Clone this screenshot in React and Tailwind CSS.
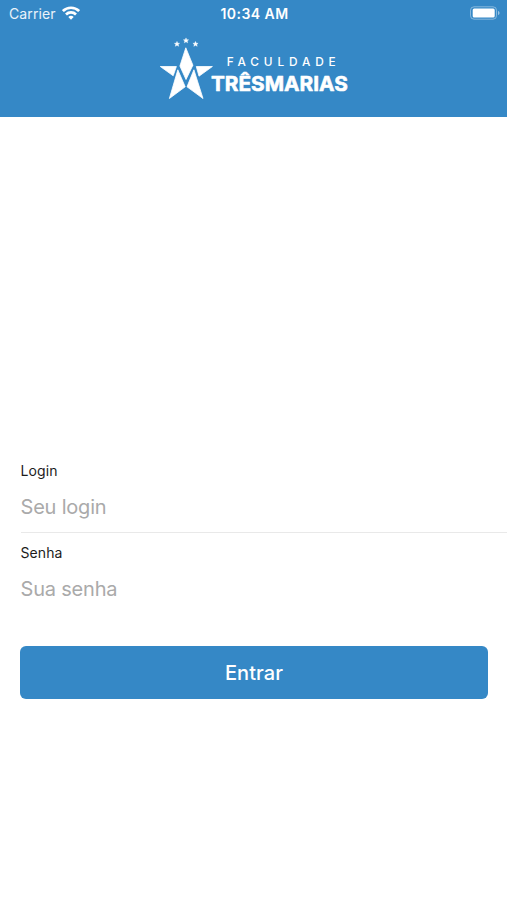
import React from "react";

/**
 * Login screen
 * - Blue header with status bar and school logo
 * - Two stacked fields and a full width submit button
 */

export default function App() {
  return (
    <div className="flex h-[900px] w-full flex-col overflow-hidden bg-white font-['Inter',sans-serif]">
      <header className="h-[117px] bg-[#3588c6] text-white">
        <StatusBar />
        <Logo />
      </header>
      <main className="flex flex-col pt-[334px] pl-5">
        <Field id="login" label="Login" placeholder="Seu login" type="text" />
        <div className="ml-px h-px bg-[#e9e9e9]" />
        <Field id="senha" label="Senha" placeholder="Sua senha" type="password" />
        <button
          type="button"
          className="mt-[31.5px] mr-[19px] h-[53.5px] rounded-md bg-[#3588c6] pt-px text-[20px] font-medium tracking-[0.1px] text-white"
        >
          Entrar
        </button>
      </main>
    </div>
  );
}

function StatusBar() {
  return (
    <div className="grid h-7 grid-cols-3 items-center pr-[7px] pl-[9px] text-[14px] leading-7">
      <div className="flex items-center gap-[6px]">
        <span className="tracking-[0.1px] text-white/90">Carrier</span>
        <WifiIcon />
      </div>
      <div className="text-center text-[14px] font-semibold tracking-[0.45px] whitespace-nowrap">10:34 AM</div>
      <div className="flex justify-end">
        <BatteryIcon />
      </div>
    </div>
  );
}

function WifiIcon() {
  return (
    <svg
      aria-hidden
      className="-mt-[2px]"
      width="18"
      height="14"
      viewBox="0 0 18 14"
      fill="none"
      stroke="white"
      strokeWidth="2.7"
    >
      <path d="M0.9 5.1a11.5 11.5 0 0 1 16.2 0" />
      <path d="M4 8.5a7.1 7.1 0 0 1 10 0" />
      <path d="M9 13.7 6.3 11a3.8 3.8 0 0 1 5.4 0Z" fill="white" stroke="none" />
    </svg>
  );
}

function BatteryIcon() {
  return (
    <svg aria-hidden className="-mt-[2px]" width="30" height="14" viewBox="0 0 30 14">
      <rect x="0.5" y="0.8" width="26" height="12.4" rx="3.5" fill="none" stroke="white" strokeOpacity="0.4" />
      <rect x="2.7" y="2.6" width="22" height="9" rx="1.5" fill="white" />
      <path d="M28 5v4c1-.4 1.5-1.1 1.5-2s-.5-1.6-1.5-2Z" fill="white" fillOpacity="0.5" />
    </svg>
  );
}

function Logo() {
  return (
    <svg
      role="img"
      aria-label="Faculdade Três Marias"
      className="mx-auto mt-[2px] block h-[80px] w-[207px]"
      viewBox="150 30 207 80"
      fill="white"
    >
      <SmallStar x={177} y={44} />
      <SmallStar x={186} y={40.5} />
      <SmallStar x={195.5} y={44} />
      <g stroke="white" strokeWidth="0.8" strokeLinejoin="round">
        <path d="M185.8 47.8 192.9 65.2 186 79.5 179.9 66Z" />
        <path d="M160.3 66.5H176.4L173.2 75.8Z" />
        <path d="M196.3 66.5H212.4L199 76.2Z" />
        <path d="M177.8 69.8 185.2 86.8 169.4 98.5Z" />
        <path d="M193.9 69.8 187 86.8 203 98.5Z" />
      </g>
      <text x="226.7" y="66.3" textLength="109" fontSize="11.8" fontWeight="500">
        FACULDADE
      </text>
      <text
        x="211"
        y="91"
        textLength="136.8"
        lengthAdjust="spacingAndGlyphs"
        fontSize="20.2"
        fontWeight="700"
        stroke="white"
        strokeWidth="0.6"
        strokeLinejoin="round"
      >
        TRÊSMARIAS
      </text>
    </svg>
  );
}

function SmallStar({ x, y }) {
  return (
    <path
      transform={`translate(${x} ${y})`}
      d="M0-2.6.8-.8 2.6-.7 1.2.5 1.7 2.3 0 1.3-1.7 2.3-1.2.5-2.6-.7-.8-.8Z"
      stroke="white"
      strokeWidth="0.4"
    />
  );
}

function Field({ id, label, placeholder, type }) {
  return (
    <div className="flex h-[81px] flex-col pl-[0.5px]">
      <label htmlFor={id} className="mt-[10px] text-[14px] leading-5 tracking-[0.1px] text-[#1c1c1c]">
        {label}
      </label>
      <input
        id={id}
        type={type}
        placeholder={placeholder}
        className="mt-3 h-7 bg-transparent text-[20px] tracking-[-0.2px] outline-none placeholder:text-[#aaaaaa]"
      />
    </div>
  );
}
